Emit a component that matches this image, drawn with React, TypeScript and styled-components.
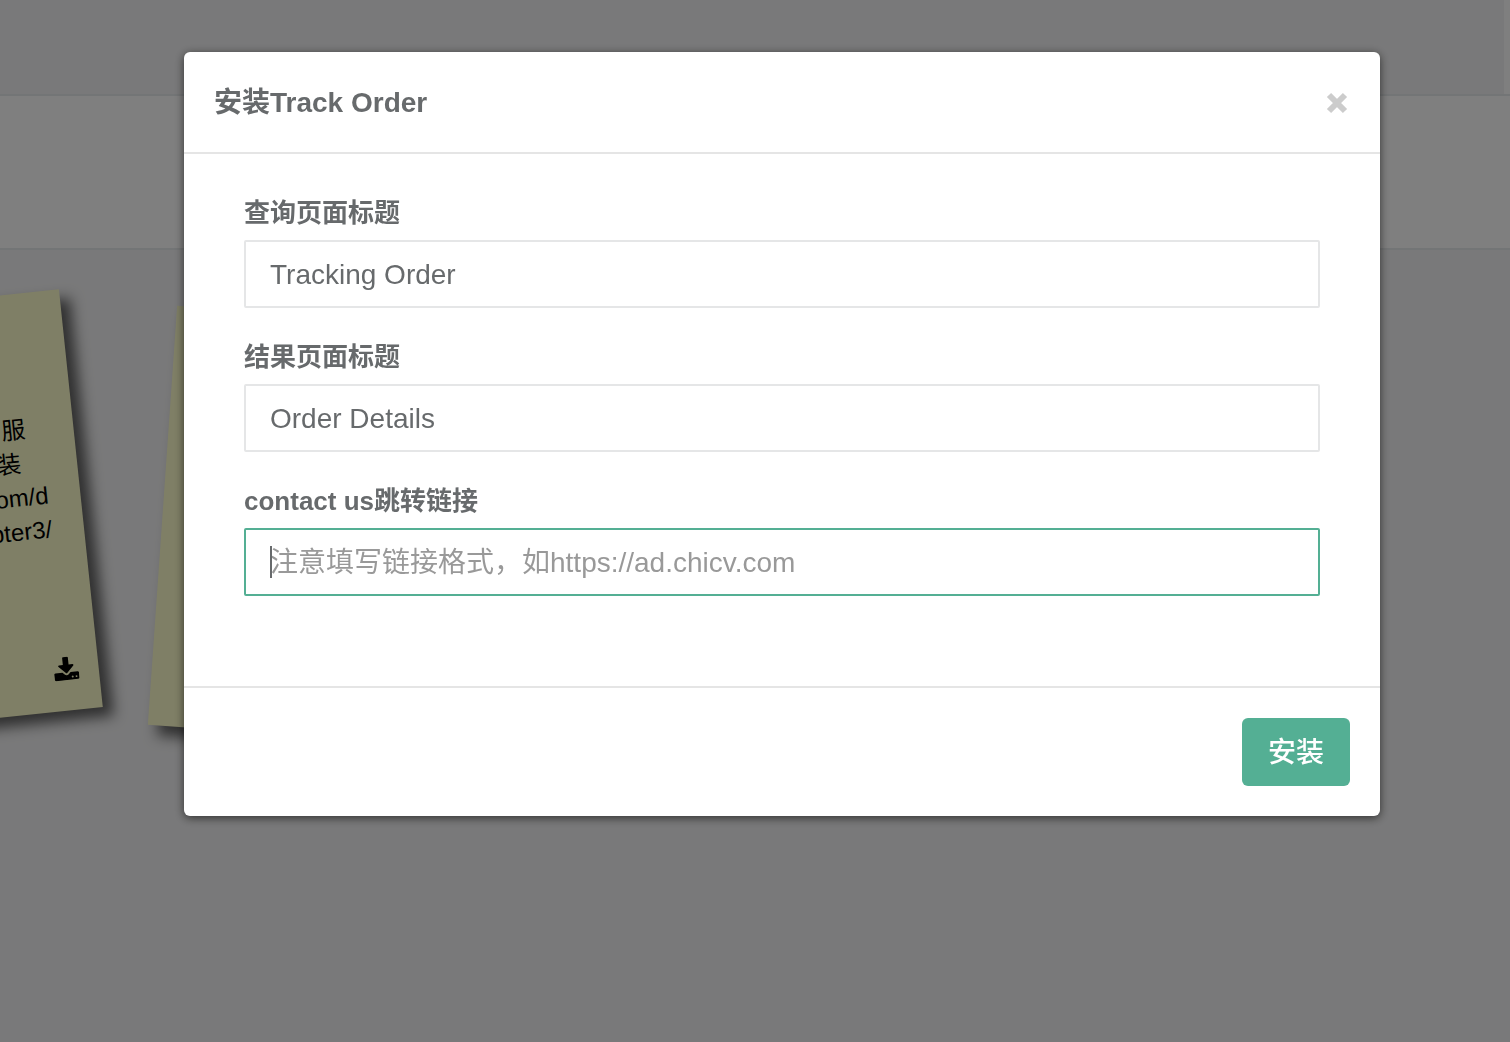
import React from "react";
import styled, { createGlobalStyle } from "styled-components";

const Global = createGlobalStyle`
  *, *::before, *::after { box-sizing: border-box; }
  body {
    margin: 0;
    overflow: hidden;
    background: #f3f3f4;
    color: #676a6c;
    font-family: "Liberation Sans", "Noto Sans CJK SC", sans-serif;
    font-size: 28px;
    line-height: 40px;
  }
`;

const Page = styled.div`
  min-height: 100vh;
  overflow: hidden;
`;

const TopBar = styled.header`
  height: 96px;
  border-bottom: 2px solid #e7eaec;
  display: flex;
  justify-content: flex-end;
`;

const TopBarEdge = styled.div`
  width: 6px;
  background: #fff;
`;

const Heading = styled.div`
  height: 154px;
  background: #fff;
  border-bottom: 2px solid #e7eaec;
`;

const Board = styled.ul`
  list-style: none;
  margin: 0 0 0 -338px;
  padding: 60px 0;
  display: flex;
  gap: 80px;
`;

const Note = styled.li<{ $tilt: number; $drop?: number }>`
  flex: none;
  width: 420px;
  height: 420px;
  margin-top: ${(p) => p.$drop ?? 0}px;
  padding: 119px 32px 30px 20px;
  display: flex;
  flex-direction: column;
  align-items: flex-end;
  background: #ffc;
  color: #000;
  box-shadow: 10px 10px 14px rgba(33, 33, 33, 0.7);
  transform: rotate(${(p) => p.$tilt}deg);
`;

const NoteLine = styled.div<{ $inset?: number }>`
  font-size: 24px;
  line-height: 34px;
  padding-right: ${(p) => p.$inset ?? 0}px;
`;

const Download = styled.a`
  display: block;
  margin-top: auto;
  margin-right: -12px;
  width: 25px;
  height: 24px;
  color: inherit;

  svg { display: block; width: 100%; height: 100%; }
`;

const Backdrop = styled.div`
  position: fixed;
  inset: 0;
  padding: 52px 130px 52px 184px;
  background: rgba(0, 0, 0, 0.5);
`;

const Dialog = styled.form`
  background: #fff;
  border-radius: 6px;
  box-shadow: 0 2px 10px rgba(0, 0, 0, 0.6);
`;

const DialogHeader = styled.div`
  display: flex;
  align-items: center;
  justify-content: space-between;
  padding: 30px 30px 28px;
  border-bottom: 2px solid #e5e5e5;
`;

const Title = styled.h4`
  margin: 0;
  font-size: 28px;
  line-height: 42px;
  font-weight: 700;
`;

const Close = styled.button`
  border: 0;
  padding: 0;
  width: 26px;
  height: 24px;
  background: none;
  color: #ccc;

  svg { display: block; width: 24px; height: 24px; margin: 0 auto; }
`;

const DialogBody = styled.div`
  display: flex;
  flex-direction: column;
  gap: 30px;
  padding: 40px 60px 90px;
`;

const Field = styled.div`
  display: flex;
  flex-direction: column;
  gap: 8px;
`;

const Label = styled.label`
  font-size: 26px;
  line-height: 38px;
  font-weight: 700;
`;

const InputWrap = styled.div<{ $caret?: boolean }>`
  position: relative;
  display: flex;

  &::after {
    content: "";
    display: ${(p) => (p.$caret ? "block" : "none")};
    position: absolute;
    left: 26px;
    top: 18px;
    width: 2px;
    height: 32px;
    background: #676a6c;
    pointer-events: none;
  }

  &:has(input:not(:placeholder-shown))::after { display: none; }
`;

const Input = styled.input`
  width: 100%;
  height: 68px;
  padding: 14px 24px 12px;
  border: 2px solid #e5e6e7;
  border-radius: 2px;
  background: #fff;
  color: #676a6c;
  font: inherit;
  outline: none;

  &:placeholder-shown { caret-color: transparent; }
  &::placeholder { color: #999; opacity: 1; }
  &:focus { border-color: #54af94; }
`;

const DialogFooter = styled.div`
  display: flex;
  justify-content: flex-end;
  padding: 30px;
  border-top: 2px solid #e5e5e5;
`;

const Submit = styled.button`
  height: 68px;
  padding: 2px 26px 0;
  border: 0;
  border-radius: 6px;
  background: #54af94;
  color: #fff;
  font: inherit;
  font-weight: 500;
`;

export default function App() {
  return (
    <>
      <Global />
      <Page>
        <TopBar>
          <TopBarEdge />
        </TopBar>
        <Heading />
        <Board>
          <Note $tilt={-6}>
            <NoteLine $inset={16}>服</NoteLine>
            <NoteLine $inset={24}>装</NoteLine>
            <NoteLine>com/d</NoteLine>
            <NoteLine>pter3/</NoteLine>
            <Download href="#" aria-label="下载">
              <svg viewBox="0 0 1664 1536" fill="currentColor">
                <path d="M1280 1344q0-26-19-45t-45-19-45 19-19 45 19 45 45 19 45-19 19-45zm256 0q0-26-19-45t-45-19-45 19-19 45 19 45 45 19 45-19 19-45zm128-224v320q0 40-28 68t-68 28h-1472q-40 0-68-28t-28-68v-320q0-40 28-68t68-28h465l135 136q58 56 136 56t136-56l136-136h464q40 0 68 28t28 68zm-325-569q17 41-14 70l-448 448q-18 19-45 19t-45-19l-448-448q-31-29-14-70 17-39 59-39h256v-448q0-26 19-45t45-19h256q26 0 45 19t19 45v448h256q42 0 59 39z" />
              </svg>
            </Download>
          </Note>
          <Note $tilt={4} $drop={10} />
        </Board>
      </Page>
      <Backdrop>
        <Dialog role="dialog" aria-labelledby="dialog-title" onSubmit={(e) => e.preventDefault()}>
          <DialogHeader>
            <Title id="dialog-title">安装Track Order</Title>
            <Close type="button" aria-label="关闭">
              <svg viewBox="0 0 24 24" stroke="currentColor" strokeWidth="6">
                <path d="M4 4l16 16M20 4l-16 16" />
              </svg>
            </Close>
          </DialogHeader>
          <DialogBody>
            <Field>
              <Label htmlFor="query-title">查询页面标题</Label>
              <InputWrap>
                <Input id="query-title" defaultValue="Tracking Order" />
              </InputWrap>
            </Field>
            <Field>
              <Label htmlFor="result-title">结果页面标题</Label>
              <InputWrap>
                <Input id="result-title" defaultValue="Order Details" />
              </InputWrap>
            </Field>
            <Field>
              <Label htmlFor="contact-link">contact us跳转链接</Label>
              <InputWrap $caret>
                <Input id="contact-link" autoFocus placeholder="注意填写链接格式，如https://ad.chicv.com" />
              </InputWrap>
            </Field>
          </DialogBody>
          <DialogFooter>
            <Submit type="submit">安装</Submit>
          </DialogFooter>
        </Dialog>
      </Backdrop>
    </>
  );
}
